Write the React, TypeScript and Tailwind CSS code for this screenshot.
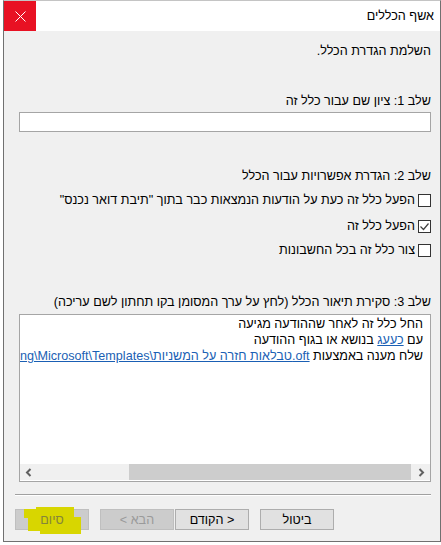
import React from "react";

function Checkbox({ checked = false }: { checked?: boolean }) {
  return (
    <span className="w-[13px] h-[13px] shrink-0 border border-[#333333] bg-white flex items-center justify-center">
      {checked && (
        <svg width="11" height="11" viewBox="0 0 11 11">
          <polyline points="1.5,5.5 4.5,8.5 9.5,2.5" fill="none" stroke="#404040" strokeWidth="1.2" />
        </svg>
      )}
    </span>
  );
}

function Button({ label, disabled = false }: { label: string; disabled?: boolean }) {
  return (
    <div
      className={
        disabled
          ? "w-[74px] h-[21px] border border-[#bfbfbf] bg-[#cccccc] text-[#9a9a9a] flex items-center justify-center"
          : "w-[74px] h-[21px] border border-[#adadad] bg-[#e1e1e1] text-black flex items-center justify-center"
      }
    >
      {label}
    </div>
  );
}

export default function App() {
  return (
    <div
      className="w-[441px] h-[545px] bg-white overflow-hidden text-[12.6px] leading-4 text-black"
      style={{ fontFamily: '"Liberation Sans", "DejaVu Sans", sans-serif' }}
      dir="rtl"
    >
      <div className="w-[438px] h-[542px] border border-[#707070] border-t-[#c4c4c4] flex flex-col">
        {/* Title bar */}
        <div className="h-[30px] bg-white flex items-center justify-between shrink-0">
          <span className="pr-[6px]">אשף הכללים</span>
          <div className="w-[32px] h-[30px] bg-[#e81123] flex items-center justify-center">
            <svg width="11" height="11" viewBox="0 0 11 11">
              <line x1="0.5" y1="0.5" x2="10.5" y2="10.5" stroke="white" strokeWidth="1" />
              <line x1="10.5" y1="0.5" x2="0.5" y2="10.5" stroke="white" strokeWidth="1" />
            </svg>
          </div>
        </div>

        {/* Body */}
        <div className="flex-1 bg-[#f0f0f0] pr-[9px] pl-[11px] flex flex-col">
          <div className="mt-[12px]">השלמת הגדרת הכלל.</div>

          <div className="mt-[34px]">שלב 1: ציון שם עבור כלל זה</div>
          <div className="mt-[3px] ml-[4px] h-[20px] bg-white border border-[#a5a5a5]" />

          <div className="mt-[36px]">שלב 2: הגדרת אפשרויות עבור הכלל</div>
          <div className="mt-[8px] h-4 flex items-center gap-[3px]">
            <Checkbox />
            <span className="whitespace-nowrap">הפעל כלל זה כעת על הודעות הנמצאות כבר בתוך "תיבת דואר נכנס"</span>
          </div>
          <div className="mt-[10px] h-4 flex items-center gap-[3px]">
            <Checkbox checked />
            <span>הפעל כלל זה</span>
          </div>
          <div className="mt-[8px] h-4 flex items-center gap-[3px]">
            <Checkbox />
            <span>צור כלל זה בכל החשבונות</span>
          </div>

          <div className="mt-[36px] whitespace-nowrap">שלב 3: סקירת תיאור הכלל (לחץ על ערך המסומן בקו תחתון לשם עריכה)</div>
          <div className="mt-[4px] ml-[4px] h-[168px] bg-white border border-[#a5a5a5] flex flex-col">
            <div className="flex-1 overflow-hidden pr-[7px] pt-[1px]">
              <div className="whitespace-nowrap">החל כלל זה לאחר שההודעה מגיעה</div>
              <div className="whitespace-nowrap">
                עם <span className="underline text-[#1a5fb4]">כעעג</span> בנושא או בגוף ההודעה
              </div>
              <div className="whitespace-nowrap">
                שלח מענה באמצעות{" "}
                <span dir="ltr" className="underline text-[#1a5fb4]">
                  C:\Users\user\AppData\Roaming\Microsoft\Templates\טבלאות חזרה על המשניות.oft
                </span>
              </div>
            </div>
            {/* horizontal scrollbar */}
            <div dir="ltr" className="h-[16px] mb-[1px] bg-[#f0f0f0] flex items-stretch">
              <div className="w-[17px] flex items-center justify-center">
                <svg width="7" height="9" viewBox="0 0 7 9">
                  <polyline points="5.5,1 2,4.5 5.5,8" fill="none" stroke="#606060" strokeWidth="2" />
                </svg>
              </div>
              <div className="flex-1 flex">
                <div className="ml-[92px] w-[282px] bg-[#cdcdcd]" />
              </div>
              <div className="w-[17px] flex items-center justify-center">
                <svg width="7" height="9" viewBox="0 0 7 9">
                  <polyline points="1.5,1 5,4.5 1.5,8" fill="none" stroke="#606060" strokeWidth="2" />
                </svg>
              </div>
            </div>
          </div>

          <div className="mt-[12px] h-[2px] border-t border-[#a0a0a0] border-b border-b-white" />

          <div className="mt-[13px] mr-[97px] flex items-center">
            <Button label="ביטול" />
            <div className="w-[11px]" />
            <Button label="< הקודם" />
            <div className="w-[1px]" />
            <Button label="הבא >" disabled />
            <div className="w-[11px]" />
            <div className="relative w-[74px] h-[21px] border border-[#bfbfbf] bg-[#cccccc] flex items-center justify-center">
              <svg
                className="absolute left-[8px] top-[-3px]"
                width="58"
                height="28"
                viewBox="0 0 58 28"
              >
                <path
                  d="M12 0 H50 V2 H50 V10 H57 V27 H16 V24 H4 V11 H0 V2 H12 Z"
                  fill="#d8d600"
                />
              </svg>
              <span className="relative text-[#85853a]">סיום</span>
            </div>
          </div>
        </div>
      </div>
    </div>
  );
}
